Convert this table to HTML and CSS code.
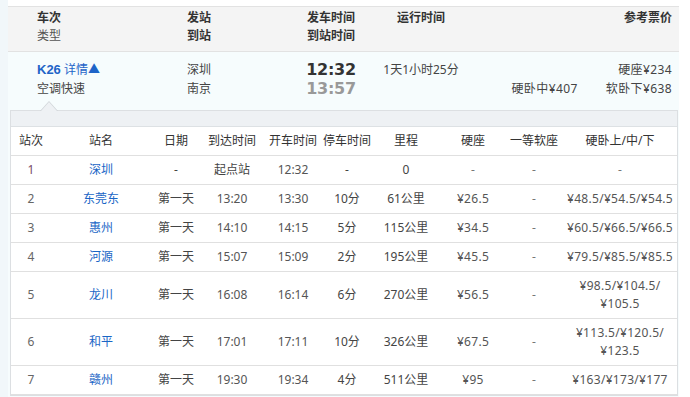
FILE: index.html
```html
<!DOCTYPE html>
<html lang="zh-CN">
<head>
<meta charset="utf-8">
<title>K26</title>
<link rel="stylesheet" href="styles.css">
</head>
<body>
<div class="page">
  <div class="wrap">
    <div class="thead">
      <div class="c1"><b>车次</b><span class="sub">类型</span></div>
      <div class="c2"><b>发站</b><b>到站</b></div>
      <div class="c3"><b>发车时间</b><b>到站时间</b></div>
      <div class="c4"><b>运行时间</b></div>
      <div class="c5"><b>参考票价</b></div>
    </div>
    <div class="train">
      <div class="trow">
        <div class="c1"><span class="line"><span class="code">K26</span> <span class="more">详情▲</span></span><span class="line">空调快速</span></div>
        <div class="c2"><span class="line">深圳</span><span class="line">南京</span></div>
        <div class="c3"><span class="line t1">12:32</span><span class="line t2">13:57</span></div>
        <div class="c4"><span class="line">1天1小时25分</span></div>
        <div class="c5 prices">
          <span class="line">硬座¥234</span>
          <span class="line pline"><span>硬卧中¥407</span><span>软卧下¥638</span></span>
        </div>
      </div>
      <div class="detail">
        <span class="caret"></span>
        <div class="band"></div>
        <table class="stops">
          <colgroup>
            <col class="w1"><col class="w2"><col class="w3"><col class="w4"><col class="w5">
            <col class="w6"><col class="w7"><col class="w8"><col class="w9"><col class="w10">
          </colgroup>
          <thead>
            <tr><th>站次</th><th>站名</th><th>日期</th><th>到达时间</th><th>开车时间</th><th>停车时间</th><th>里程</th><th>硬座</th><th>一等软座</th><th>硬卧上/中/下</th></tr>
          </thead>
          <tbody>
            <tr><td class="no first">1</td><td class="st">深圳</td><td>-</td><td>起点站</td><td class="tm">12:32</td><td>-</td><td>0</td><td class="dash">-</td><td class="dash">-</td><td class="dash">-</td></tr>
            <tr><td class="no">2</td><td class="st">东莞东</td><td>第一天</td><td class="tm">13:20</td><td class="tm">13:30</td><td>10分</td><td>61公里</td><td class="pr">¥26.5</td><td class="dash">-</td><td class="pr">¥48.5/¥54.5/¥54.5</td></tr>
            <tr><td class="no">3</td><td class="st">惠州</td><td>第一天</td><td class="tm">14:10</td><td class="tm">14:15</td><td>5分</td><td>115公里</td><td class="pr">¥34.5</td><td class="dash">-</td><td class="pr">¥60.5/¥66.5/¥66.5</td></tr>
            <tr><td class="no">4</td><td class="st">河源</td><td>第一天</td><td class="tm">15:07</td><td class="tm">15:09</td><td>2分</td><td>195公里</td><td class="pr">¥45.5</td><td class="dash">-</td><td class="pr">¥79.5/¥85.5/¥85.5</td></tr>
            <tr><td class="no">5</td><td class="st">龙川</td><td>第一天</td><td class="tm">16:08</td><td class="tm">16:14</td><td>6分</td><td>270公里</td><td class="pr">¥56.5</td><td class="dash">-</td><td class="pr">¥98.5/¥104.5/<br>¥105.5</td></tr>
            <tr><td class="no">6</td><td class="st">和平</td><td>第一天</td><td class="tm">17:01</td><td class="tm">17:11</td><td>10分</td><td>326公里</td><td class="pr">¥67.5</td><td class="dash">-</td><td class="pr">¥113.5/¥120.5/<br>¥123.5</td></tr>
            <tr><td class="no">7</td><td class="st">赣州</td><td>第一天</td><td class="tm">19:30</td><td class="tm">19:34</td><td>4分</td><td>511公里</td><td class="pr">¥95</td><td class="dash">-</td><td class="pr">¥163/¥173/¥177</td></tr>
          </tbody>
        </table>
      </div>
    </div>
  </div>
</div>
</body>
</html>
```

FILE: styles.css
```css
html, body {
  margin: 0;
  padding: 0;
  background: #ffffff;
}

body {
  font-family: "Noto Sans", "Noto Sans CJK SC", sans-serif;
  font-size: 12px;
  color: #444;
  height: 397px;
  overflow: hidden;
}

.page {
  background: #ffffff;
  padding: 6px 11px 0 0;
  border-left: 8px solid #f1f7fa;
  min-height: 397px;
  box-sizing: border-box;
}

.wrap {
  width: 671px;
}

.thead,
.trow {
  display: flex;
}

.thead {
  background: #f4f4f4;
  border-top: 1px solid #e2e2e2;
  border-bottom: 1px solid #e2e2e2;
  padding: 2px 0 6px;
  line-height: 18px;
  color: #333;
}

.thead b {
  display: block;
  font-weight: bold;
}

.thead .sub {
  display: block;
  color: #555;
}

.c1 {
  width: 150px;
  padding-left: 29px;
}

.c2 {
  width: 103px;
}

.c3 {
  width: 82px;
  text-align: center;
}

.c4 {
  width: 98px;
  text-align: center;
}

.c5 {
  flex: 1;
  text-align: right;
  padding-right: 7px;
}

.train {
  background: #f6fcfd;
  padding-bottom: 20px;
}

.trow {
  padding: 8px 0;
  line-height: 19px;
  color: #444;
}

.line {
  display: block;
  white-space: nowrap;
}

.code {
  color: #1e64c8;
  font-weight: bold;
  font-family: "Liberation Sans", sans-serif;
  font-size: 13px;
}

.more {
  color: #1e64c8;
}

.t1,
.t2 {
  font-family: "DejaVu Sans", sans-serif;
  font-weight: bold;
  font-size: 16px;
  letter-spacing: -0.3px;
}

.t1 {
  color: #333;
}

.t2 {
  color: #999;
}

.prices {
  letter-spacing: 0.4px;
}

.pline {
  display: flex;
  justify-content: flex-end;
  gap: 28px;
}

.detail {
  position: relative;
  margin: 4px 1px 0 2px;
  border: 1px solid #dcdfe2;
  background: #ffffff;
}

.caret {
  position: absolute;
  left: 29px;
  top: -10px;
  width: 0;
  height: 0;
  border-left: 9px solid transparent;
  border-right: 9px solid transparent;
  border-bottom: 10px solid #cfd4d8;
}

.caret::after {
  content: "";
  position: absolute;
  left: -8px;
  top: 1px;
  border-left: 8px solid transparent;
  border-right: 8px solid transparent;
  border-bottom: 9px solid #eef1f4;
}

.band {
  height: 15px;
  background: #eef1f4;
  border-bottom: 1px solid #dde1e4;
}

.stops {
  width: 100%;
  border-collapse: collapse;
  table-layout: fixed;
}

.w1 { width: 40px; }
.w2 { width: 100px; }
.w3 { width: 50px; }
.w4 { width: 62px; }
.w5 { width: 60px; }
.w6 { width: 48px; }
.w7 { width: 70px; }
.w8 { width: 64px; }
.w9 { width: 58px; }
.w10 { width: 114px; }

.stops th,
.stops td {
  padding: 5px 0;
  line-height: 18px;
  text-align: center;
  border-bottom: 1px solid #e0e0e0;
  white-space: nowrap;
  font-weight: normal;
}

.stops th {
  color: #333;
}

.stops td {
  color: #444;
}

.stops td.no {
  color: #666;
}

.stops td.first {
  color: #7a4a66;
}

.stops td.st {
  color: #1a66c6;
}

.stops td.tm {
  color: #555;
}

.stops td.pr {
  color: #555;
  letter-spacing: 0.3px;
}

.stops td.dash {
  color: #777;
}
```
